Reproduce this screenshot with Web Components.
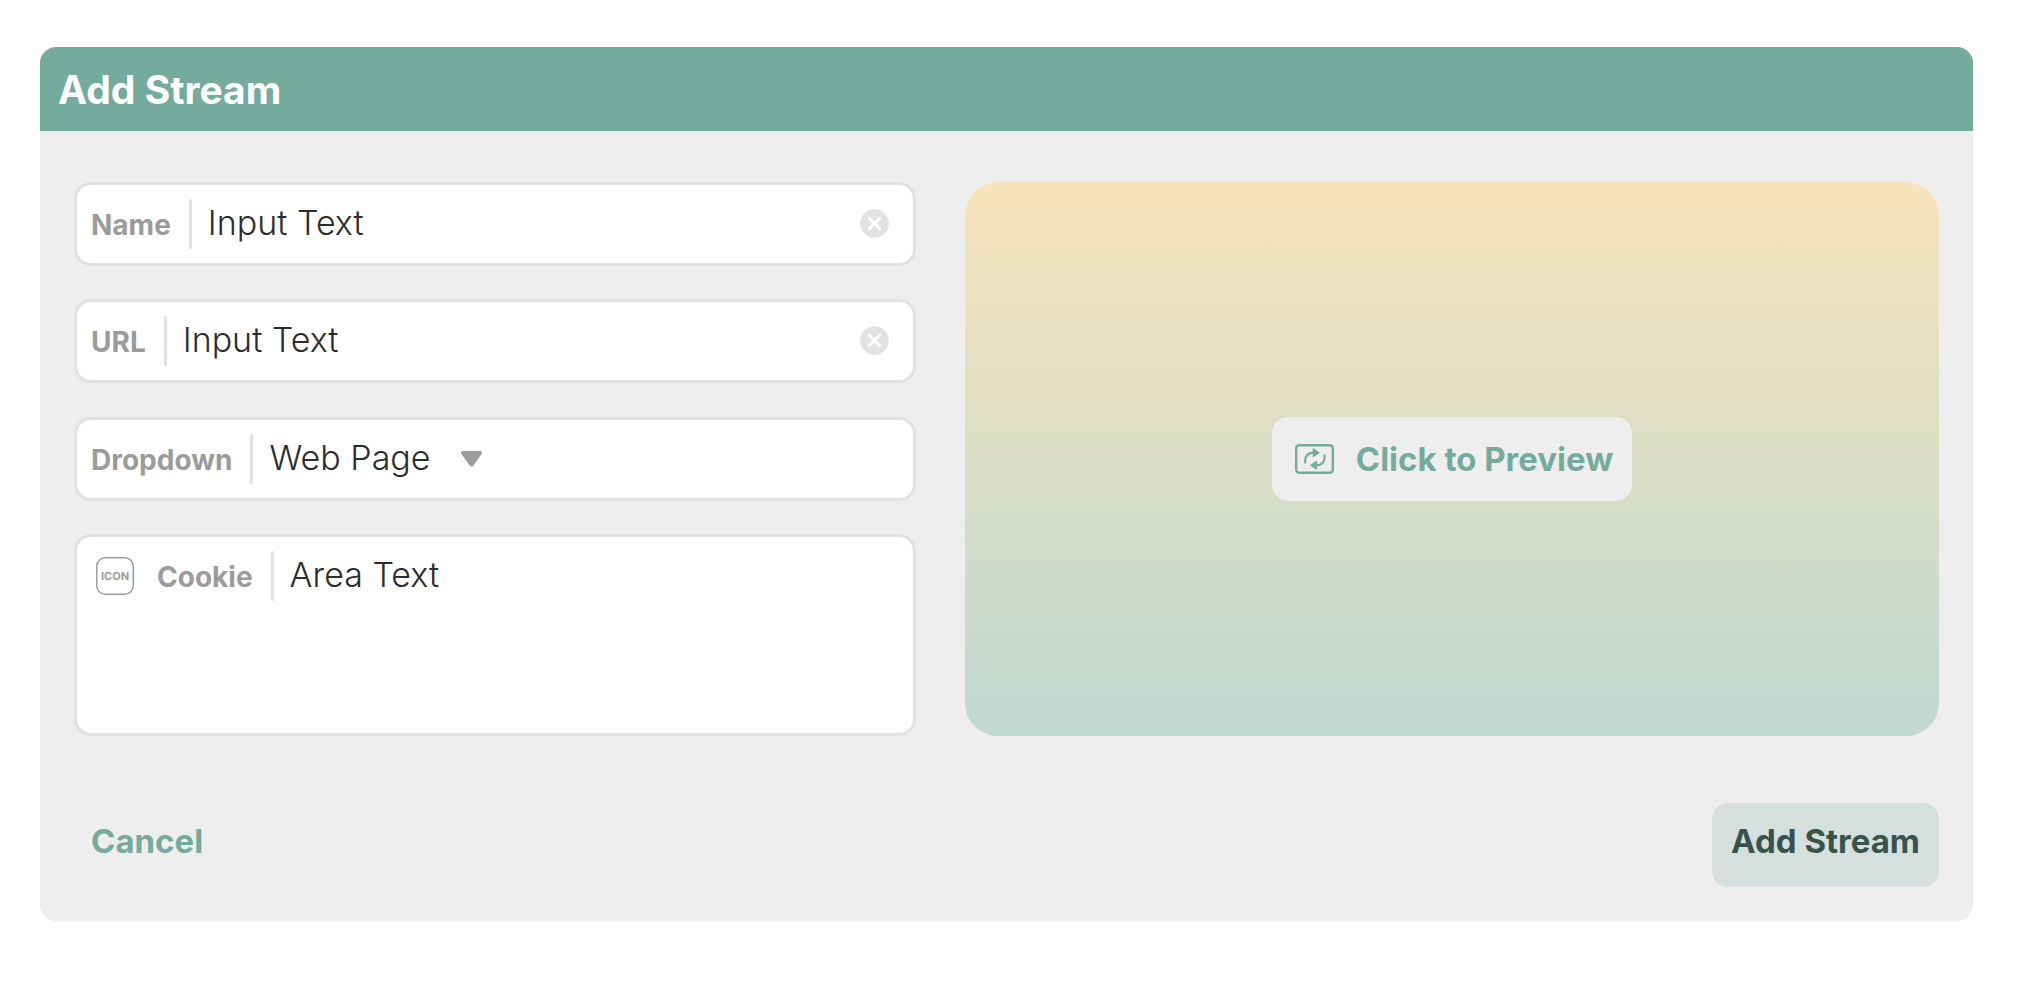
<!DOCTYPE html>
<html lang="en">
<head>
<meta charset="utf-8">
<title>Add Stream</title>
<style>
  body {
    margin: 0;
    padding: 47px 53px 47px 40px;
    background: #fff;
    font-family: Inter, "Liberation Sans", sans-serif;
    --accent: #75ab9d;
    --surface: #eee;
    --line: #e1e2e3;
    --muted: #9b9b9b;
    --ink: #2b2c2c;
  }
</style>
</head>
<body>
<stream-dialog heading="Add Stream">
  <text-field label="Name" value="Input Text"></text-field>
  <text-field label="URL" value="Input Text"></text-field>
  <select-field label="Dropdown" value="Web Page"></select-field>
  <area-field label="Cookie" value="Area Text"><icon-slot slot="icon"></icon-slot></area-field>
  <preview-pane slot="preview">Click to Preview</preview-pane>
  <action-button slot="actions" kind="plain">Cancel</action-button>
  <action-button slot="actions" kind="soft">Add Stream</action-button>
</stream-dialog>

<script>
const fieldStyles = `
  :host { display: block; }
  .field {
    box-sizing: border-box;
    display: flex;
    align-items: flex-start;
    min-height: 84px;
    padding: 0 24px 0 14px;
    border: 3px solid var(--line);
    border-radius: 17px;
    background: #fff;
  }
  label {
    flex: none;
    padding-top: 19px;
    font-size: 28px;
    font-weight: 700;
    line-height: 42px;
    color: var(--muted);
  }
  .rule {
    flex: none;
    width: 3px;
    height: 50px;
    margin: 14px 16px 0 18px;
    border-radius: 2px;
    background: var(--line);
  }
  input, select, textarea {
    appearance: none;
    box-sizing: border-box;
    min-width: 0;
    margin: 0;
    padding: 17px 0 0;
    border: 0;
    outline: 0;
    background: none;
    font: 350 34px/42px Inter, "Liberation Sans", sans-serif;
    color: var(--ink);
  }
`;

const define = (name, css, html) => {
  customElements.define(name, class extends HTMLElement {
    constructor() {
      super();
      const template = document.createElement('template');
      template.innerHTML = `<style>${css}</style>${html(this)}`;
      this.attachShadow({ mode: 'open' }).append(template.content.cloneNode(true));
    }
  });
};

define('stream-dialog', `
  :host { display: block; border-radius: 16px; overflow: hidden; background: var(--surface); }
  header { padding: 2px 18px 0; background: var(--accent); }
  h1 { margin: 0; font-size: 39px; font-weight: 700; line-height: 82px; color: #fff; }
  .body { display: grid; grid-template-columns: 842fr 974fr; gap: 49px; padding: 51px 34px 0; }
  .fields { display: flex; flex-direction: column; justify-content: space-between; gap: 33px; min-height: 554px; }
  footer { display: flex; justify-content: space-between; padding: 67px 34px 34px; }
`, el => `
  <header><h1>${el.getAttribute('heading')}</h1></header>
  <div class="body">
    <div class="fields"><slot></slot></div>
    <slot name="preview"></slot>
  </div>
  <footer><slot name="actions"></slot></footer>
`);

define('text-field', fieldStyles + `
  input { flex: 1; }
  button { flex: none; width: 29px; height: 29px; margin-top: 24px; padding: 0; border: 0; background: none; }
  svg { display: block; }
`, el => `
  <div class="field">
    <label for="control">${el.getAttribute('label')}</label>
    <span class="rule"></span>
    <input id="control" type="text" value="${el.getAttribute('value')}">
    <button type="button" aria-label="Clear">
      <svg width="29" height="29" viewBox="0 0 29 29">
        <circle cx="14.5" cy="14.5" r="14.3" fill="#e1e2e3"/>
        <path d="M9.2 9.2 19.8 19.8M19.8 9.2 9.2 19.8" stroke="#fff" stroke-width="2.9" stroke-linecap="round"/>
      </svg>
    </button>
  </div>
`);

define('select-field', fieldStyles + `
  select { flex: none; }
  svg { flex: none; margin: 31px 0 0 30px; }
`, el => `
  <div class="field">
    <label for="control">${el.getAttribute('label')}</label>
    <span class="rule"></span>
    <select id="control"><option>${el.getAttribute('value')}</option></select>
    <svg width="21" height="16" viewBox="0 0 21 16" aria-hidden="true">
      <path d="M2 0H19Q22 .6 20.6 3L12.4 14.4Q10.5 16.8 8.6 14.4L.4 3Q-1 .6 2 0Z" fill="#9b9b9b"/>
    </svg>
  </div>
`);

define('area-field', fieldStyles + `
  .field { min-height: 202px; }
  textarea { flex: 1; align-self: stretch; resize: none; overflow: hidden; }
`, el => `
  <div class="field">
    <slot name="icon"></slot>
    <label for="control">${el.getAttribute('label')}</label>
    <span class="rule"></span>
    <textarea id="control">${el.getAttribute('value')}</textarea>
  </div>
`);

define('icon-slot', `
  :host { display: block; flex: none; margin: 20px 23px 0 5px; }
  span {
    position: relative;
    display: grid;
    place-items: center;
    width: 38px;
    height: 38px;
    font-size: 11px;
    font-weight: 700;
    line-height: 14px;
    color: var(--muted);
  }
  svg { position: absolute; inset: 0; }
`, () => `
  <span>ICON<svg width="38" height="38" viewBox="0 0 38 38" aria-hidden="true">
    <rect x=".75" y=".75" width="36.5" height="36.5" rx="8.5" fill="none" stroke="#9b9b9b" stroke-width="1.4"/>
  </svg></span>
`);

define('preview-pane', `
  :host {
    display: grid;
    place-items: center;
    border-radius: 33px;
    background: linear-gradient(#f7e4bc, #e0dfc3 40%, #bfd8d2);
  }
  button {
    display: flex;
    align-items: center;
    gap: 22px;
    height: 84px;
    padding: 0 19px 0 23px;
    border: 0;
    border-radius: 16px;
    background: var(--surface);
    font: 700 33px/42px Inter, "Liberation Sans", sans-serif;
    color: var(--accent);
  }
`, () => `
  <button type="button">
    <svg width="39" height="30" viewBox="0 0 39 30" fill="none" stroke="currentColor" aria-hidden="true">
      <rect x="1.2" y="1.2" width="36.6" height="27.6" rx="3" stroke-width="2.4"/>
      <path d="M10.2 18.6V16.3Q10.7 9.3 18 8.6" stroke-width="2.1" stroke-linecap="round"/>
      <path d="M29.6 11.4V13.7Q29.1 20.7 21.8 21.4" stroke-width="2.1" stroke-linecap="round"/>
      <path d="M18.4 5 24 8.7 18.4 12.4ZM21.4 17.6 15.8 21.3 21.4 25Z" fill="currentColor" stroke-width="1.3" stroke-linejoin="round"/>
    </svg>
    <slot></slot>
  </button>
`);

define('action-button', `
  :host { display: block; }
  button {
    height: 84px;
    padding: 0 17px 8px;
    border: 0;
    border-radius: 16px;
    background: none;
    font: 700 33px/42px Inter, "Liberation Sans", sans-serif;
    color: var(--accent);
  }
  :host([kind="soft"]) button { padding: 0 19px 8px; background: #d5e0de; color: #38534b; }
`, () => `<button type="button"><slot></slot></button>`);
</script>
</body>
</html>
